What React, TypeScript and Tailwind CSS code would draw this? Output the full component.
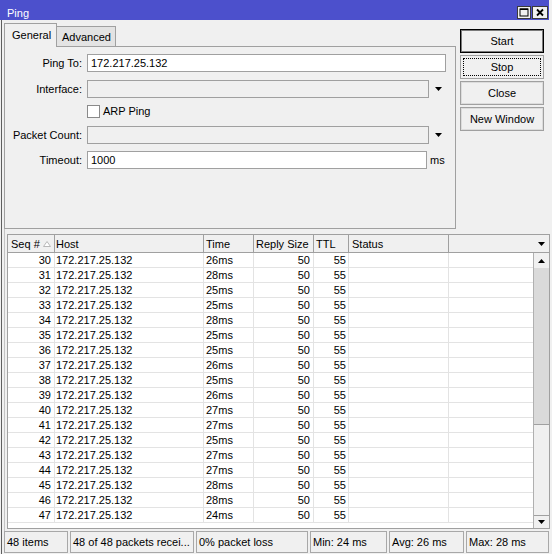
// Winbox style Ping window

const times = [26, 28, 25, 25, 28, 25, 25, 26, 25, 26, 27, 27, 25, 27, 27, 28, 28, 24];

const rows = times.map((t, i) => ({
  seq: 30 + i,
  host: '172.217.25.132',
  time: `${t}ms`,
  size: 50,
  ttl: 55,
}));

function ArrowDown() {
  return (
    <svg width="7" height="4" viewBox="0 0 7 4">
      <path d="M0 0h7L3.5 4z" fill="#000" />
    </svg>
  );
}

function ArrowUp() {
  return (
    <svg width="7" height="4" viewBox="0 0 7 4">
      <path d="M0 4h7L3.5 0z" fill="#000" />
    </svg>
  );
}

function Label({ text }: { text: string }) {
  return <span className="w-[77px] text-right">{text}</span>;
}

export default function App() {
  return (
    <div className="h-[554px] w-[552px] overflow-hidden bg-[#f0f0f0] font-['Liberation_Sans',Arial,sans-serif] text-[11px] leading-none text-black">
      {/* title bar */}
      <div className="flex h-[20px] w-[549px] bg-[#4c50cc] pl-[7px] pr-[1px]">
        <span className="pt-[8px] text-white">Ping</span>
        <div className="ml-auto mt-[6px] flex gap-[1px]">
          <div className="h-[13px] w-[14px] border border-[#3a3a3a] bg-[#f0f0f0]">
            <svg width="12" height="11" viewBox="0 0 12 11">
              <rect x="2" y="2" width="8" height="7" fill="none" stroke="#000" strokeWidth="1" />
              <rect x="2" y="1.5" width="8" height="1.5" fill="#000" />
            </svg>
          </div>
          <div className="h-[13px] w-[16px] border border-[#3a3a3a] bg-[#f0f0f0]">
            <svg width="14" height="11" viewBox="0 0 14 11">
              <path d="M4 2.5l6 6M10 2.5l-6 6" stroke="#000" strokeWidth="1.8" />
            </svg>
          </div>
        </div>
      </div>

      <div className="ml-[1px] flex h-[534px] w-[549px] flex-col border-l border-[#5f5f5f]">
        {/* top area */}
        <div className="flex h-[209px]">
          <div className="ml-[2px] flex w-[452px] flex-col pt-[3px]">
            <div className="flex h-[23px] items-end">
              <div className="relative z-10 -mb-px h-[24px] w-[53px] border border-b-0 border-[#a0a0a0] bg-[#f0f0f0] pl-[7px] pt-[6px]">
                General
              </div>
              <div className="h-[20px] w-[59px] border-r border-t border-[#a0a0a0] bg-[#e3e3e3] pl-[5px] pt-[5px]">
                Advanced
              </div>
            </div>
            <div className="flex h-[183px] flex-col border border-[#a0a0a0]">
              <div className="mt-[7px] flex h-[18px] items-center">
                <Label text="Ping To:" />
                <div className="ml-[5px] flex h-[18px] w-[359px] items-center border border-[#a0a0a0] bg-white pl-[3px]">
                  172.217.25.132
                </div>
              </div>
              <div className="mt-[8px] flex h-[18px] items-center">
                <Label text="Interface:" />
                <div className="ml-[5px] h-[18px] w-[342px] border border-[#a0a0a0] bg-[#f0f0f0]" />
                <div className="flex w-[18px] justify-center">
                  <ArrowDown />
                </div>
              </div>
              <div className="mt-[4px] flex h-[18px] items-center">
                <div className="ml-[82px] h-[13px] w-[13px] border border-[#8a8a8a] bg-white" />
                <span className="ml-[3px]">ARP Ping</span>
              </div>
              <div className="mt-[6px] flex h-[18px] items-center">
                <Label text="Packet Count:" />
                <div className="ml-[5px] h-[18px] w-[342px] border border-[#a0a0a0] bg-[#f0f0f0]" />
                <div className="flex w-[18px] justify-center">
                  <ArrowDown />
                </div>
              </div>
              <div className="mt-[7px] flex h-[18px] items-center">
                <Label text="Timeout:" />
                <div className="ml-[5px] flex h-[18px] w-[340px] items-center border border-[#a0a0a0] bg-white pl-[3px]">
                  1000
                </div>
                <span className="ml-[3px]">ms</span>
              </div>
            </div>
          </div>

          <div className="ml-[4px] flex flex-col gap-[2px] pt-[9px]">
            <div className="flex h-[24px] w-[84px] items-center justify-center border border-black bg-[#f0f0f0] shadow-[inset_0_0_0_1px_#7a7a7a]">
              Start
            </div>
            <div className="relative flex h-[24px] w-[84px] items-center justify-center border border-[#a0a0a0] bg-[#f0f0f0]">
              <div className="absolute inset-[2px] border border-dotted border-black" />
              Stop
            </div>
            <div className="flex h-[24px] w-[84px] items-center justify-center border border-[#a0a0a0] bg-[#f0f0f0] shadow-[inset_0_0_0_1px_#dcdcdc]">
              Close
            </div>
            <div className="flex h-[24px] w-[84px] items-center justify-center border border-[#a0a0a0] bg-[#f0f0f0] shadow-[inset_0_0_0_1px_#dcdcdc]">
              New Window
            </div>
          </div>
        </div>

        {/* list */}
        <div className="ml-[2px] w-[546px] border-l border-[#c4c4c4] pb-[2px] pl-[2px] pt-[5px]">
          <div className="flex h-[295px] w-[543px] flex-col border border-[#a0a0a0] bg-white">
            <div className="flex h-[18px] border-b border-[#a0a0a0] bg-[#f0f0f0]">
              <div className="flex w-[47px] items-start border-r border-[#a0a0a0] pl-[3px] pt-[4px]">
                <span>Seq #</span>
                <svg className="ml-[3px] mt-[2px]" width="8" height="6" viewBox="0 0 8 6">
                  <path d="M0.5 5.5h7L4 0.5z" fill="#fff" stroke="#b8b8b8" strokeWidth="1" />
                </svg>
              </div>
              <div className="w-[149px] border-r border-[#a0a0a0] pl-[1px] pt-[4px]">Host</div>
              <div className="w-[50px] border-r border-[#a0a0a0] pl-[2px] pt-[4px]">Time</div>
              <div className="w-[60px] border-r border-[#a0a0a0] pl-[2px] pt-[4px]">Reply Size</div>
              <div className="w-[35px] border-r border-[#a0a0a0] pl-[2px] pt-[4px]">TTL</div>
              <div className="w-[100px] border-r border-[#a0a0a0] pl-[3px] pt-[4px]">Status</div>
              <div className="flex flex-1 justify-end">
                <div className="flex w-[16px] items-center justify-center">
                  <ArrowDown />
                </div>
              </div>
            </div>

            <div className="flex flex-1">
              <div className="w-[525px]">
                {rows.map((r) => (
                  <div key={r.seq} className="flex h-[15px] border-b border-[#e3e3e3]">
                    <div className="flex w-[47px] items-center justify-end border-r border-[#e3e3e3] pr-[3px]">{r.seq}</div>
                    <div className="flex w-[149px] items-center border-r border-[#e3e3e3] pl-[1px]">{r.host}</div>
                    <div className="flex w-[50px] items-center border-r border-[#e3e3e3] pl-[2px]">{r.time}</div>
                    <div className="flex w-[60px] items-center justify-end border-r border-[#e3e3e3] pr-[3px]">{r.size}</div>
                    <div className="flex w-[35px] items-center justify-end border-r border-[#e3e3e3] pr-[2px]">{r.ttl}</div>
                    <div className="w-[100px] border-r border-[#e3e3e3]" />
                    <div className="w-[84px]" />
                  </div>
                ))}
              </div>
              <div className="flex w-[16px] flex-col border-l border-[#b0b0b0]">
                <div className="flex h-[15px] items-center justify-center bg-[#f0f0f0]">
                  <ArrowUp />
                </div>
                <div className="h-[156px] bg-[#dadada]" />
                <div className="h-[91px] border-t border-[#a0a0a0] bg-[#f0f0f0]" />
                <div className="flex h-[13px] items-center justify-center border-t border-[#a0a0a0] bg-[#f0f0f0]">
                  <ArrowDown />
                </div>
              </div>
            </div>
          </div>
        </div>

        {/* status bar */}
        <div className="ml-[2px] flex h-[22px] gap-[2px]">
          <div className="flex w-[64px] items-center border border-[#a8a8a8] pl-[2px]">48 items</div>
          <div className="flex w-[124px] items-center border border-[#a8a8a8] pl-[2px]">48 of 48 packets recei...</div>
          <div className="flex w-[112px] items-center border border-[#a8a8a8] pl-[2px]">0% packet loss</div>
          <div className="flex w-[77px] items-center border border-[#a8a8a8] pl-[2px]">Min: 24 ms</div>
          <div className="flex w-[75px] items-center border border-[#a8a8a8] pl-[2px]">Avg: 26 ms</div>
          <div className="flex w-[83px] items-center border border-[#a8a8a8] pl-[2px]">Max: 28 ms</div>
        </div>
      </div>
    </div>
  );
}
